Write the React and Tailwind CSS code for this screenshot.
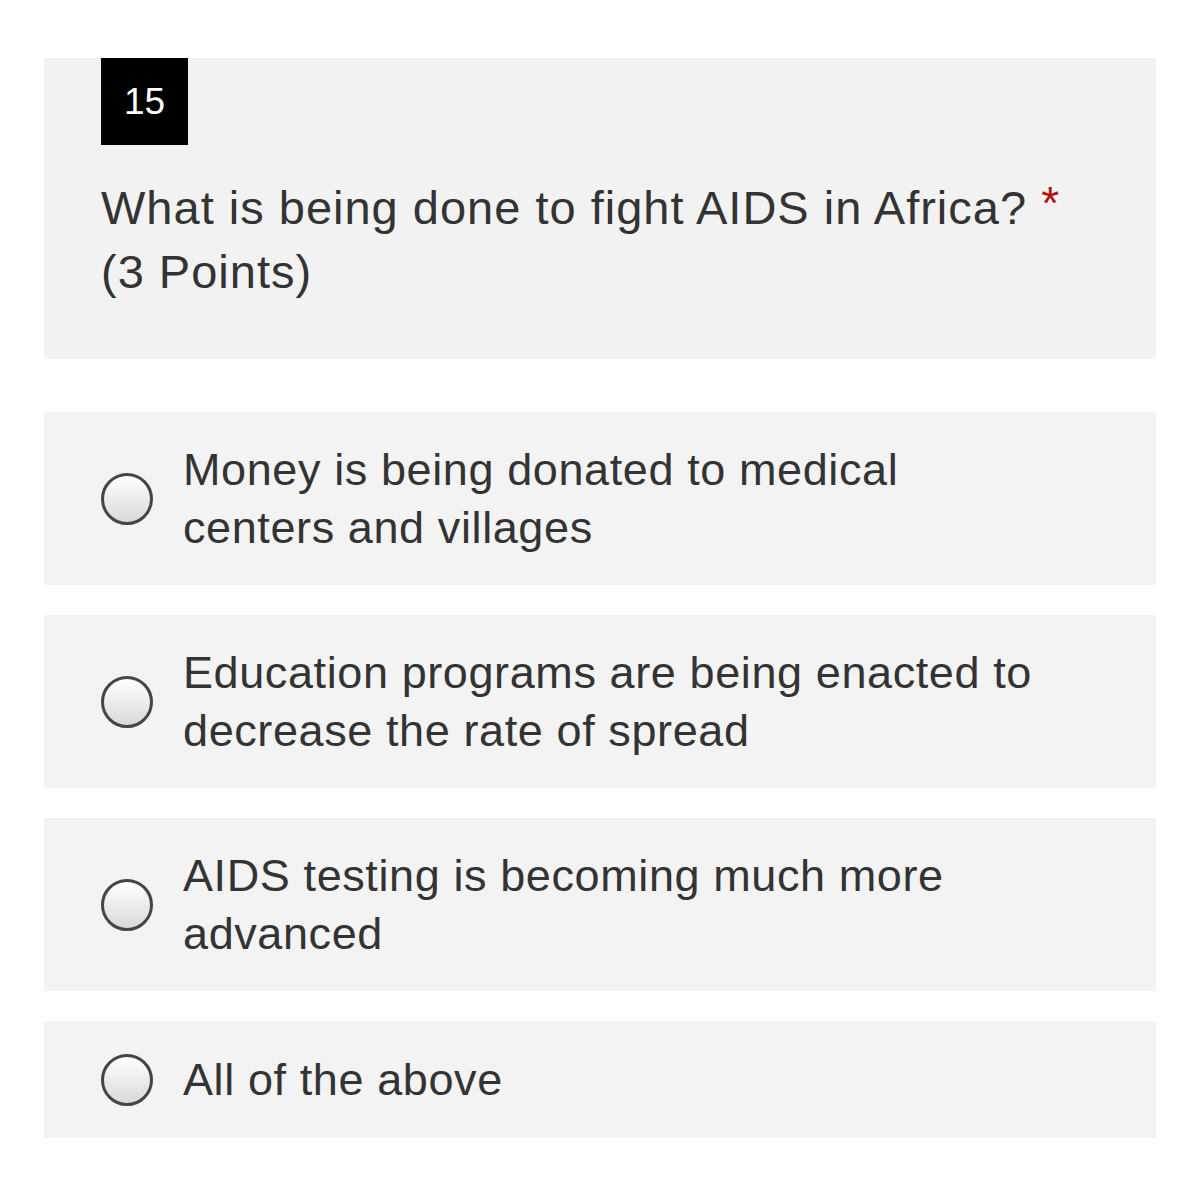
export default function App() {
    const opciones = [
        "Money is being donated to medical centers and villages",
        "Education programs are being enacted to decrease the rate of spread",
        "AIDS testing is becoming much more advanced",
        "All of the above",
    ];

    return (
        <div className="w-[1200px] h-[1195px] bg-white pt-[58px] px-[44px] font-['Liberation_Sans',Arial,sans-serif] text-[#333333]">
            {/* Pregunta */}
            <div className="bg-[#f2f2f2] pl-[57px] pr-[40px] pb-[57px]">
                <div className="w-[87px] h-[87px] bg-black text-white text-[37px] flex items-center justify-center">
                    15
                </div>
                <div className="mt-[31px] h-[126px] text-[47px] leading-[63px] tracking-[1px]">
                    What is being done to fight AIDS in Africa?{" "}
                    <span className="text-[#b01010] text-[46px] relative top-[-5px]">*</span>
                    <br />
                    (3 Points)
                </div>
            </div>

            {/* Opciones */}
            <div className="mt-[53px] flex flex-col gap-[30px]">
                {opciones.map((op) => (
                    <div key={op} className="bg-[#f3f3f3] min-h-[117px] pl-[57px] pr-[60px] pt-[29px] pb-[28px] flex items-center gap-[30px]">
                        <span className="shrink-0 w-[52px] h-[52px] rounded-full border-[3px] border-[#454545] bg-gradient-to-b from-white to-[#d9d9d9]"></span>
                        <span className="max-w-[875px] text-[45px] leading-[58px] tracking-[0.6px]">{op}</span>
                    </div>
                ))}
            </div>
        </div>
    );
}
